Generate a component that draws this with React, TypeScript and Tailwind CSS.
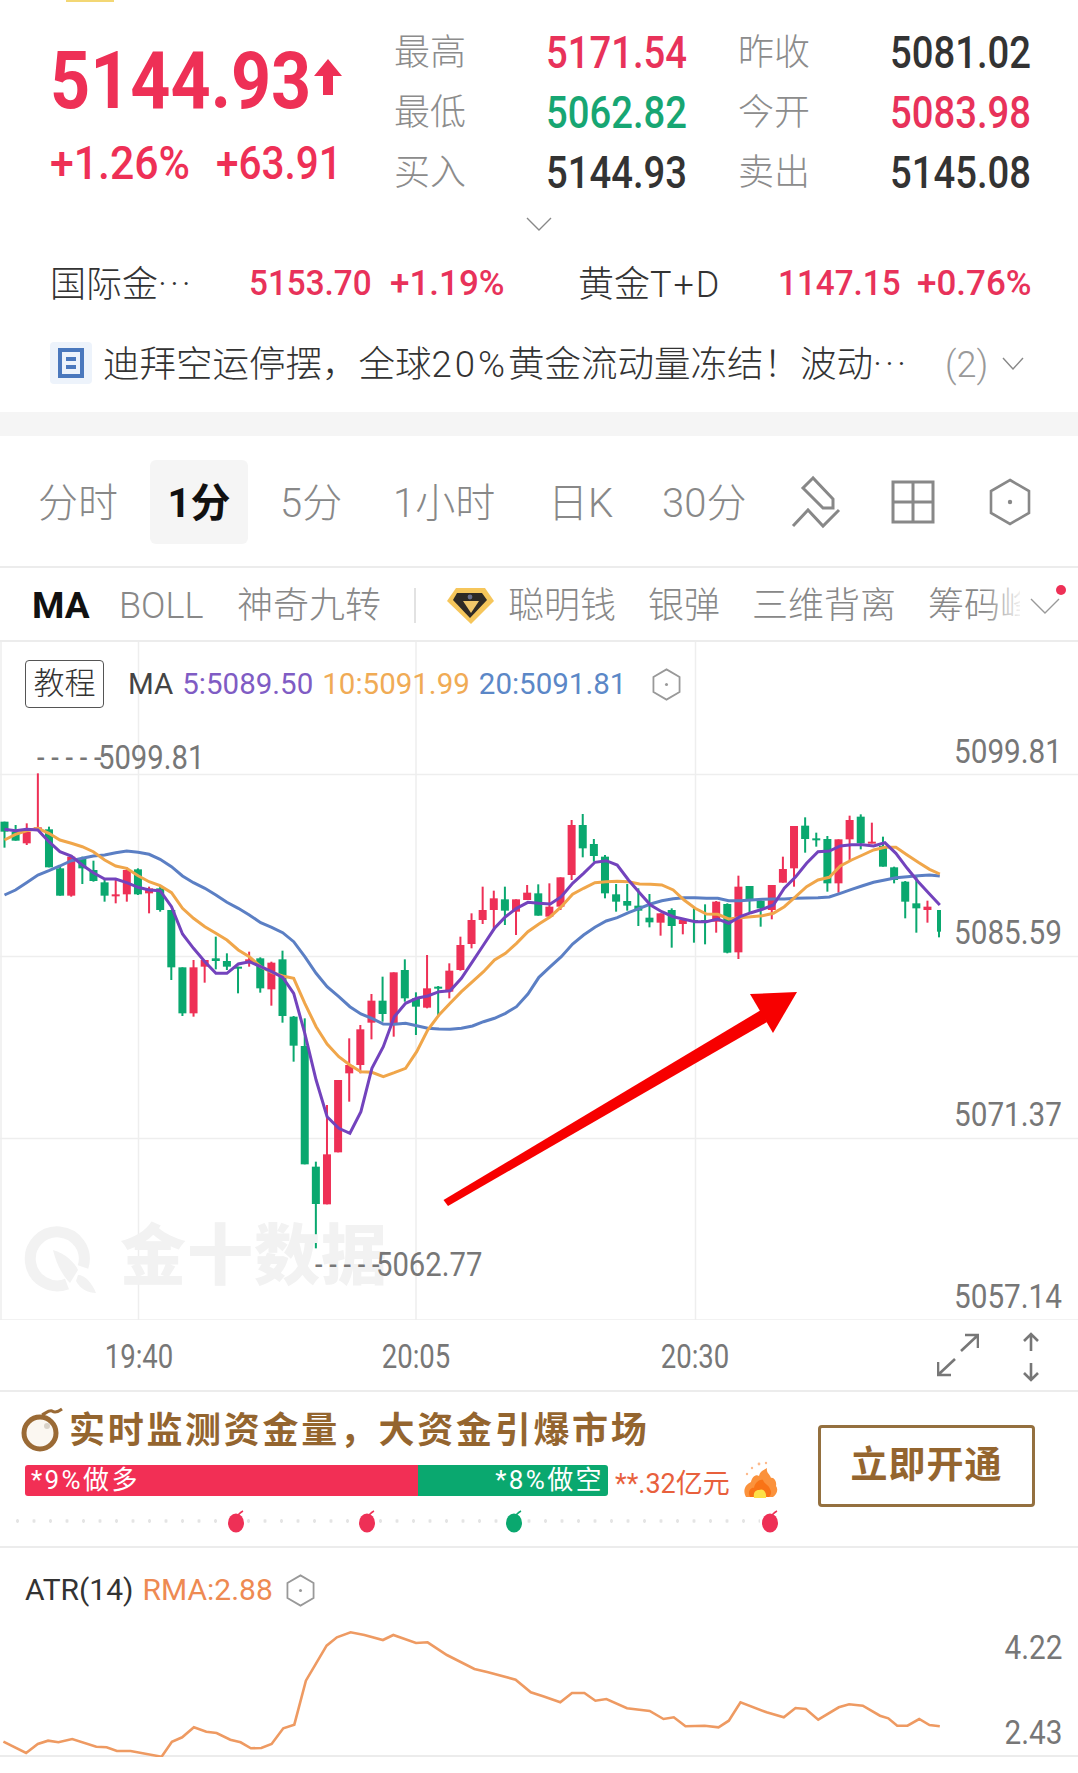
import { ReactNode } from "react";

const DIGIT = "[font-family:Roboto,'Noto_Sans_CJK_SC',sans-serif]";
const RED = "#ee3056";
const GREEN = "#0aa86f";

// candles traced from the screenshot: [color, wickTop, wickBottom, bodyTop, bodyBottom], y is (px - 740) * 3
const CANDLES: [string, number, number, number, number][] = [
  ["g", 245, 323, 245, 275], ["g", 255, 302, 275, 302], ["r", 250, 315, 275, 310], ["r", 100, 270, 262, 270],
  ["g", 260, 382, 268, 382], ["g", 380, 467, 385, 467], ["r", 345, 470, 350, 467], ["g", 350, 432, 355, 385],
  ["g", 362, 425, 390, 423], ["g", 420, 485, 427, 467], ["r", 420, 490, 463, 467], ["r", 382, 485, 390, 463],
  ["g", 385, 465, 388, 463], ["r", 440, 520, 445, 460], ["g", 435, 515, 445, 510], ["g", 510, 720, 510, 682],
  ["g", 682, 828, 682, 820], ["r", 660, 830, 682, 820], ["r", 660, 728, 660, 680], ["g", 590, 688, 655, 663],
  ["g", 640, 690, 663, 680], ["g", 680, 760, 680, 684], ["r", 635, 680, 658, 670], ["g", 652, 758, 655, 745],
  ["r", 665, 797, 668, 748], ["g", 632, 848, 658, 828], ["g", 828, 965, 830, 917], ["g", 835, 1273, 918, 1273],
  ["g", 1265, 1525, 1280, 1392], ["r", 1095, 1393, 1243, 1393], ["r", 1020, 1237, 1020, 1237], ["r", 895, 1085, 975, 1000],
  ["r", 855, 1000, 868, 975], ["r", 762, 898, 782, 848], ["g", 710, 845, 782, 822], ["r", 697, 890, 697, 850],
  ["g", 658, 785, 690, 775], ["g", 757, 885, 775, 800], ["r", 645, 805, 745, 803], ["g", 738, 825, 740, 746],
  ["r", 670, 775, 692, 755], ["r", 590, 692, 615, 690], ["r", 520, 625, 540, 612], ["r", 440, 552, 510, 540],
  ["r", 452, 565, 475, 510], ["g", 440, 555, 478, 512], ["r", 478, 585, 478, 515], ["r", 435, 480, 458, 480],
  ["g", 433, 527, 460, 527], ["r", 430, 530, 500, 530], ["r", 412, 510, 412, 500], ["r", 240, 420, 255, 405],
  ["g", 222, 352, 255, 325], ["g", 297, 365, 312, 348], ["g", 345, 475, 350, 460], ["g", 432, 515, 463, 485],
  ["g", 432, 512, 483, 497], ["g", 445, 558, 497, 512], ["g", 462, 562, 533, 547], ["r", 520, 587, 520, 548],
  ["g", 505, 623, 510, 558], ["r", 535, 583, 540, 552], ["g", 505, 608, 540, 546], ["g", 493, 613, 540, 546],
  ["r", 483, 578, 485, 545], ["g", 490, 640, 492, 638], ["r", 407, 657, 440, 637], ["g", 438, 520, 438, 478],
  ["g", 480, 560, 482, 505], ["r", 435, 538, 435, 510], ["r", 350, 428, 387, 428], ["r", 258, 440, 258, 385],
  ["g", 232, 338, 257, 297], ["g", 278, 320, 295, 299], ["g", 288, 455, 297, 430], ["r", 298, 458, 298, 430],
  ["r", 227, 360, 240, 298], ["g", 223, 328, 230, 310], ["r", 248, 310, 305, 310], ["g", 290, 380, 318, 380],
  ["g", 380, 430, 382, 420], ["g", 423, 535, 425, 485], ["g", 405, 578, 490, 505], ["r", 482, 548, 500, 510],
  ["g", 510, 592, 510, 575],
];

// moving averages: left part in x/2.904, right part in 540 + x/2.914
const MA5L = [13,268,45,272,77,268,110,270,142,305,174,335,207,348,239,375,271,398,304,417,336,417,368,428,401,442,433,450,465,452,498,500,530,582,562,625,595,665,627,700,659,700,692,672,724,665,757,680,789,695,821,712,853,760,885,880,918,1020,950,1130,984,1165,1016,1180,1048,1115,1080,985,1113,920,1145,830,1178,790,1210,775,1242,768,1275,755,1307,752,1340,715,1372,665,1404,615,1436,565,1468,530,1500,505,1533,487,1565,490];
const MA5R = [30,492,62,470,95,430,127,400,160,367,193,362,225,375,258,420,290,458,322,495,355,515,388,530,420,538,452,545,485,545,518,537,550,550,583,530,615,518,648,508,680,495,712,445,745,410,777,370,810,335,843,333,875,318,908,314,940,314,972,318,1005,308,1037,340,1070,385,1102,425,1135,462,1165,495];
const MA10L = [13,300,45,283,77,272,110,265,142,280,174,300,207,310,239,320,271,335,304,360,336,378,368,385,401,407,433,425,465,437,498,458,530,505,562,535,595,560,627,580,659,600,692,630,724,650,757,680,789,697,821,708,853,715,885,790,918,860,950,912,984,950,1016,975,1048,995,1080,997,1113,1010,1145,998,1178,985,1210,935,1242,870,1275,825,1307,790,1340,755,1372,725,1404,695,1436,660,1468,640,1500,610,1533,575,1565,552];
const MA10R = [30,530,62,500,95,463,127,445,160,428,193,425,225,424,258,425,290,432,322,433,355,435,388,450,420,480,452,505,485,522,518,523,550,537,583,533,615,530,648,527,680,520,712,500,745,470,777,440,810,420,843,412,875,378,908,360,940,345,972,330,1005,322,1037,322,1070,345,1102,367,1135,388,1165,402];
const MA20L = [13,465,45,450,77,428,110,405,142,392,174,378,207,362,239,355,271,348,304,345,336,338,368,333,401,337,433,343,465,358,498,380,530,408,562,428,595,445,627,465,659,487,692,505,724,525,757,548,789,562,821,578,853,605,885,650,918,700,950,740,984,770,1016,800,1048,822,1080,835,1113,852,1145,853,1178,850,1210,857,1242,865,1275,867,1307,868,1340,865,1372,858,1404,845,1436,835,1468,820,1500,800,1533,762,1565,712];
const MA20R = [30,680,62,650,95,612,127,585,160,562,193,543,225,533,258,518,290,505,322,492,355,482,388,476,420,473,452,473,485,475,518,475,550,482,583,482,615,480,648,478,680,477,712,477,745,475,777,474,810,473,843,471,875,460,908,448,940,437,972,427,1005,420,1037,413,1070,410,1102,407,1135,405,1165,408];
const ATR = [5,1088,38,1122,55,1095,70,1085,85,1090,105,1080,140,1103,155,1105,170,1116,190,1116,235,1133,250,1088,265,1075,282,1045,300,1058,315,1062,335,1082,350,1090,365,1108,380,1107,395,1095,412,1048,428,1037,445,905,475,800,490,775,510,760,530,768,557,783,572,768,605,792,622,790,650,828,690,870,710,880,750,902,772,940,790,952,815,970,832,942,850,942,866,965,882,960,912,988,945,996,965,1020,980,1015,997,1042,1025,1040,1045,1045,1060,1025,1077,970,1115,1000,1140,1015,1157,987,1172,990,1190,1022,1220,985,1235,976,1255,980,1280,1010,1292,1018,1305,1040,1320,1040,1337,1020,1352,1038,1367,1042];

function maPoints(left: number[], right: number[]) {
  const out: string[] = [];
  for (let i = 0; i < left.length; i += 2) out.push(`${(left[i] / 2.904).toFixed(1)},${(740 + left[i + 1] / 3).toFixed(1)}`);
  for (let i = 0; i < right.length; i += 2) out.push(`${(540 + right[i] / 2.914).toFixed(1)},${(740 + right[i + 1] / 3).toFixed(1)}`);
  return out.join(" ");
}

function atrPoints() {
  const out: string[] = [];
  for (let i = 0; i < ATR.length; i += 2) out.push(`${(ATR[i] / 1.4545).toFixed(1)},${(ATR[i + 1] / 3).toFixed(1)}`);
  return out.join(" ");
}

function Hexagon({ className }: { className: string }) {
  return (
    <svg viewBox="0 0 42 48" className={className} fill="none" stroke="currentColor" strokeWidth="2.6">
      <polygon points="21,2 40,13 40,35 21,46 2,35 2,13" />
      <circle cx="21" cy="24" r="2.2" fill="currentColor" stroke="none" />
    </svg>
  );
}

function Stat({ label, value, color }: { label: string; value: string; color: string }) {
  return (
    <>
      <div className="flex h-[60px] items-center text-[36px] font-light text-[#8c8c8c]">
        <span className="mt-[2px]">{label}</span>
      </div>
      <div className={`${DIGIT} ${color} flex h-[60px] items-center pt-[1px] text-[45px] font-medium`}>
        <span className="inline-block origin-left scale-x-[0.85]">{value}</span>
      </div>
    </>
  );
}

function Tab({ children, className }: { children: ReactNode; className: string }) {
  return <div className={`shrink-0 pt-[4px] ${className}`}>{children}</div>;
}

function Bomb({ color, className }: { color: string; className: string }) {
  return (
    <svg viewBox="0 0 20 24" className={className}>
      <path d="M12 6 C14 4 15 3 17 2" stroke={color} strokeWidth="1.6" fill="none" />
      <ellipse cx="10" cy="14" rx="8" ry="9.5" fill={color} />
    </svg>
  );
}

function Candles() {
  return (
    <>
      {CANDLES.map(([c, wt, wb, bt, bb], i) => {
        const x = 4.5 + 11.12 * i;
        const fill = c === "r" ? RED : GREEN;
        // the last candle is cut off by the edge of the plot
        const last = i === CANDLES.length - 1;
        return (
          <g key={i} fill={fill}>
            <rect x={last ? 938 : x - 1} y={740 + wt / 3} width={2} height={(wb - wt) / 3} />
            <rect x={last ? 937 : x - 4} y={740 + bt / 3} width={last ? 4 : 8} height={Math.max(2, (bb - bt) / 3)} />
          </g>
        );
      })}
    </>
  );
}

function AxisLabel({ value, className }: { value: string; className: string }) {
  return (
    <div className={`${DIGIT} absolute right-[16px] origin-right scale-x-[0.9] text-[33px] leading-[42px] text-[#777] ${className}`}>{value}</div>
  );
}

function TimeLabel({ value, className }: { value: string; className: string }) {
  return (
    <div className={`${DIGIT} absolute top-[15px] w-[100px] scale-x-[0.81] text-center text-[34px] leading-[42px] text-[#777] ${className}`}>{value}</div>
  );
}

function ExtremeLabel({ value, dashClass, numClass }: { value: string; dashClass: string; numClass: string }) {
  return (
    <>
      <div className={`${DIGIT} absolute origin-left scale-x-[0.8] text-[34px] leading-[42px] text-[#777] whitespace-nowrap ${dashClass}`}>- - - - -</div>
      <div className={`${DIGIT} absolute origin-left scale-x-[0.86] text-[34px] leading-[42px] text-[#777] whitespace-nowrap ${numClass}`}>{value}</div>
    </>
  );
}

export default function App() {
  return (
    <div className="relative h-[1773px] w-[1078px] overflow-hidden bg-white [font-family:Roboto,'Noto_Sans_CJK_SC',sans-serif] text-[#333]">
      <div className="ml-[66px] h-[2px] w-[48px] bg-[#f3d774]" />

      {/* quote header */}
      <div className="flex h-[205px] pl-[50px] pt-[20px]">
        <div className="w-[344px]">
          <div className="flex h-[114px] items-center pt-[4px]">
            <span className={`${DIGIT} inline-block w-[264px] shrink-0 origin-left scale-x-[0.875] text-[80px] font-bold text-[#ee3056]`}>5144.93</span>
            <svg viewBox="0 0 28 36" className="mt-[-8px] h-[36px] w-[28px] shrink-0" fill="#ee3056">
              <path d="M14 0 L28 17 L19 17 L19 36 L9 36 L9 17 L0 17 Z" />
            </svg>
          </div>
          <div className={`${DIGIT} flex h-[50px] items-center pt-[4px] text-[46px] font-medium text-[#ee3056]`}>
            <span className="inline-block w-[166px] shrink-0 origin-left scale-x-[0.93]">+1.26%</span>
            <span className="inline-block origin-left scale-x-[0.88]">+63.91</span>
          </div>
        </div>
        <div className="grid grid-cols-[152px_192px_152px_140px] content-start">
          <Stat label="最高" value="5171.54" color="text-[#e8325a]" />
          <Stat label="昨收" value="5081.02" color="text-[#333]" />
          <Stat label="最低" value="5062.82" color="text-[#17a673]" />
          <Stat label="今开" value="5083.98" color="text-[#e8325a]" />
          <Stat label="买入" value="5144.93" color="text-[#333]" />
          <Stat label="卖出" value="5145.08" color="text-[#333]" />
        </div>
      </div>

      <div className="flex h-[45px] justify-center pt-[10px]">
        <svg viewBox="0 0 26 14" className="h-[14px] w-[26px]" fill="none" stroke="#888" strokeWidth="1.4">
          <path d="M1 1 L13 13 L25 1" />
        </svg>
      </div>

      <div className="flex h-[62px] items-center pl-[50px] pt-[3px] text-[36px] font-light whitespace-nowrap">
        <span className="w-[199px]">国际金<span className="tracking-[3px]">···</span></span>
        <span className={`${DIGIT} inline-block w-[141px] origin-left scale-x-[0.95] text-[35px] font-medium text-[#e8325a]`}>5153.70</span>
        <span className={`${DIGIT} w-[188px] text-[35px] font-medium text-[#e8325a]`}>+1.19%</span>
        <span className="w-[200px]">黄金<span className="tracking-[2px]">T+D</span></span>
        <span className={`${DIGIT} inline-block w-[139px] origin-left scale-x-[0.95] text-[35px] font-medium text-[#e8325a]`}>1147.15</span>
        <span className={`${DIGIT} text-[35px] font-medium text-[#e8325a]`}>+0.76%</span>
      </div>

      <div className="flex h-[98px] items-center pl-[50px]">
        <div className="flex h-[42px] w-[42px] items-center justify-center rounded-[4px] bg-[#edf3fb]">
          <div className="flex h-[30px] w-[26px] flex-col items-center justify-center gap-[4px] border-[4px] border-[#4a78bd]">
            <div className="h-[4px] w-[10px] bg-[#4a78bd]" />
            <div className="h-[4px] w-[10px] bg-[#4a78bd]" />
          </div>
        </div>
        <span className="ml-[11px] mt-[4px] w-[842px] text-[36.5px] font-light whitespace-nowrap">
          迪拜空运停摆，全球<span className="tracking-[3px]">20%</span>黄金流动量冻结！波动<span className="tracking-[3px]">···</span>
        </span>
        <span className="mt-[4px] text-[36px] font-light text-[#999]">(2)</span>
        <svg viewBox="0 0 22 13" className="ml-[14px] h-[13px] w-[22px]" fill="none" stroke="#888" strokeWidth="1.4">
          <path d="M1 1 L11 12 L21 1" />
        </svg>
      </div>

      <div className="h-[24px] bg-[#f5f5f5]" />

      {/* period tabs */}
      <div className="flex h-[132px] items-center border-b-[2px] border-[#ececec] pl-[38px] pt-[2px] text-[40px] font-light text-[#888]">
        <Tab className="w-[112px]">分时</Tab>
        <Tab className="flex h-[84px] w-[98px] items-center justify-center rounded-[6px] bg-[#f5f5f5] font-bold text-[#111]">1分</Tab>
        <Tab className="ml-[32px] w-[113px]">5分</Tab>
        <Tab className="w-[155px]">1小时</Tab>
        <Tab className="w-[114px]">日K</Tab>
        <Tab className="w-[118px]">30分</Tab>
        <svg viewBox="0 0 70 70" className="h-[70px] w-[70px] shrink-0" fill="none" stroke="#888" strokeWidth="3">
          <path d="M33 11 L23 21 L43 41 L53 41 L53 32 Z" />
          <path d="M13 59 L28 43 L43 59 L59 43" />
        </svg>
        <svg viewBox="0 0 44 44" className="ml-[41px] h-[44px] w-[44px] shrink-0" fill="none" stroke="#888" strokeWidth="3">
          <path d="M2 2 H42 V42 H2 Z M22 2 V42 M2 22 H42" />
        </svg>
        <Hexagon className="ml-[54px] h-[48px] w-[42px] shrink-0 text-[#888]" />
      </div>

      {/* indicators */}
      <div className="relative flex h-[74px] items-center border-b-[2px] border-[#ececec] pl-[32px] pt-[3px] text-[36px] font-light text-[#888] whitespace-nowrap">
        <span className="w-[87px] text-[37px] font-bold text-[#111]">MA</span>
        <span className="w-[118px] text-[36px]">BOLL</span>
        <span className="w-[177px]">神奇九转</span>
        <div className="h-[35px] w-[2px] bg-[#e2e2e2]" />
        <svg viewBox="0 0 70 60" className="ml-[19px] h-[60px] w-[70px] shrink-0">
          <path d="M21 12 H50 L59 25 L36 48 L12 25 Z" fill="#f6c65b" />
          <path d="M22 17 H47 L52 24 L35 42 L18 24 Z" fill="#2f2a25" />
          <path d="M28 25 H44 L36 37 Z" fill="#f0c66a" />
          <circle cx="35" cy="21" r="2.4" fill="#6a6f8c" />
        </svg>
        <span className="ml-[3px] w-[140px]">聪明钱</span>
        <span className="w-[104px]">银弹</span>
        <span className="w-[176px]">三维背离</span>
        <span className="w-[92px] overflow-hidden">筹码峰</span>
        <div className="absolute left-[985px] top-0 h-full w-[40px] bg-gradient-to-r from-transparent to-white" />
        <svg viewBox="0 0 30 16" className="absolute left-[1030px] top-[30px] h-[16px] w-[30px]" fill="none" stroke="#999" strokeWidth="1.4">
          <path d="M1 1 L15 15 L29 1" />
        </svg>
        <div className="absolute left-[1056px] top-[17px] h-[10px] w-[10px] rounded-full bg-[#ee3056]" />
      </div>

      {/* candle chart */}
      <div className="relative h-[678px]">
        <svg viewBox="0 642 1078 678" className="absolute inset-0 h-[678px] w-[1078px]">
          <g stroke="#eeeeee" strokeWidth="1.5">
            <path d="M1 642 V1320 M138.5 642 V1320 M416 642 V1320 M695.5 642 V1320" />
            <path d="M0 774.5 H1078 M0 956.5 H1078 M0 1138.5 H1078 M0 1320 H1078" />
          </g>
          <g transform="translate(20,1215)">
            <path d="M63 52 A 27 27 0 1 0 47 69" fill="none" stroke="#f2f2f2" strokeWidth="11" />
            <path d="M33 35 C45 38 55 48 58 55 L50 68 C42 60 36 48 33 35 Z" fill="#f2f2f2" />
            <path d="M58 60 C65 60 72 68 76 78 C68 78 60 74 56 66 Z" fill="#f2f2f2" />
          </g>
          <Candles />
          <polyline points={maPoints(MA20L, MA20R)} fill="none" stroke="#5b7fc4" strokeWidth="3" />
          <polyline points={maPoints(MA10L, MA10R)} fill="none" stroke="#f0a64a" strokeWidth="3" />
          <polyline points={maPoints(MA5L, MA5R)} fill="none" stroke="#7343bd" strokeWidth="3" />
          <polygon points="443.5,1200 448,1206 767,1022 761,1010" fill="#f70000" />
          <polygon points="750,994 797,992 773,1033" fill="#f70000" />
        </svg>

        <div className="absolute left-[120px] top-[582px] text-[66px] leading-none font-black tracking-[1px] text-[#f2f2f2]">金十数据</div>

        <div className="absolute left-[25px] top-[18px] flex h-[48px] w-[79px] items-center justify-center rounded-[4px] border border-[#555] text-[31px] font-light">教程</div>
        <div className="absolute left-[128px] top-[18px] flex h-[48px] items-center text-[29.5px] whitespace-nowrap">
          <span className="text-[#444]">MA</span>
          <span className="ml-[9px] text-[#7f5cc4]">5:5089.50</span>
          <span className="ml-[9px] text-[#f0ab55]">10:5091.99</span>
          <span className="ml-[9px] text-[#5b87c7]">20:5091.81</span>
        </div>
        <Hexagon className="absolute left-[652px] top-[26px] h-[33px] w-[29px] text-[#999]" />

        <ExtremeLabel value="5099.81" dashClass="left-[37px] top-[94px]" numClass="left-[98px] top-[94px]" />
        <ExtremeLabel value="5062.77" dashClass="left-[315px] top-[601px]" numClass="left-[376px] top-[601px]" />

        <AxisLabel value="5099.81" className="top-[89px]" />
        <AxisLabel value="5085.59" className="top-[270px]" />
        <AxisLabel value="5071.37" className="top-[452px]" />
        <AxisLabel value="5057.14" className="top-[634px]" />
      </div>

      {/* time axis */}
      <div className="relative h-[72px] border-b-[2px] border-[#ececec]">
        <TimeLabel value="19:40" className="left-[89px]" />
        <TimeLabel value="20:05" className="left-[366px]" />
        <TimeLabel value="20:30" className="left-[645px]" />
        <svg viewBox="0 0 42 44" className="absolute left-[937px] top-[13px] h-[44px] w-[42px]" fill="none" stroke="#777" strokeWidth="2.6">
          <path d="M24 18 L40 3 M28 2 H41 V15 M18 26 L2 41 M14 42 H1 V29" />
        </svg>
        <svg viewBox="0 0 18 50" className="absolute left-[1022px] top-[12px] h-[50px] w-[18px]" fill="none" stroke="#777" strokeWidth="2.6">
          <path d="M9 2 V19 M2 9 L9 2 L16 9 M9 31 V48 M2 41 L9 48 L16 41" />
        </svg>
      </div>

      {/* capital banner */}
      <div className="relative flex h-[156px] border-b-[2px] border-[#ececec]">
        <div className="w-[818px] pl-[15px]">
          <div className="flex h-[69px] items-center pt-[8px]">
            <svg viewBox="0 0 60 60" className="h-[60px] w-[60px] shrink-0" fill="none">
              <circle cx="25" cy="32" r="16" fill="#fbf7f1" stroke="#9a6a35" strokeWidth="5" />
              <path d="M27 14 C31 12 34 9 37 10 C40 12 43 11 47 8" stroke="#9a6a35" strokeWidth="3" />
              <circle cx="32" cy="25" r="3" fill="#d9d2c8" />
            </svg>
            <span className="ml-[-6px] text-[36px] font-bold tracking-[2.7px] whitespace-nowrap text-[#94652f]">实时监测资金量，大资金引爆市场</span>
          </div>
          <div className="flex items-center">
            <div className="ml-[10px] flex h-[31px] w-[583px] overflow-hidden rounded-[3px] text-[26px] leading-[31px] tracking-[2.4px] text-white">
              <div className="w-[393px] bg-[#f22f55] pl-[6px]">*9%做多</div>
              <div className="flex-1 bg-[#0aa86f] pr-[4px] text-right">*8%做空</div>
            </div>
            <span className="ml-[7px] mt-[8px] text-[27px] leading-[31px] whitespace-nowrap text-[#e8603c]">**.32亿元</span>
            <svg viewBox="0 0 37 44" className="ml-[12px] mt-[-10px] h-[44px] w-[37px] shrink-0">
              <path d="M4 43 C0 36 4 30 9 28 C10 23 14 20 17 22 C18 17 22 16 25 14 C24 19 28 20 29 24 C32 23 35 28 34 32 C37 36 34 41 31 43 Z" fill="#fb923c" />
              <path d="M8 43 C5 38 9 33 12 34 C13 28 18 25 21 26 C22 30 27 31 28 35 C30 38 29 41 27 43 Z" fill="#f97316" />
              <path d="M12 44 C11 38 14 36 17 36 C21 34 25 38 24 44 Z" fill="#fde047" />
              <g fill="#fdba8c">
                <circle cx="10" cy="14" r="1.2" />
                <circle cx="17" cy="10" r="1.4" />
                <circle cx="5" cy="20" r="1.2" />
                <circle cx="24" cy="9" r="1.2" />
              </g>
            </svg>
          </div>
          <div className="relative ml-[-3px] mt-[9px] h-[24px] w-[770px] bg-[radial-gradient(circle,#e4e4e4_1.5px,transparent_2px)] bg-[length:16.5px_6px] bg-center bg-repeat-x">
            <Bomb color="#ee3056" className="absolute left-[214px] top-0 h-[24px] w-[20px] bg-white" />
            <Bomb color="#ee3056" className="absolute left-[345px] top-0 h-[24px] w-[20px] bg-white" />
            <Bomb color="#0aa86f" className="absolute left-[492px] top-0 h-[24px] w-[20px] bg-white" />
            <Bomb color="#ee3056" className="absolute left-[748px] top-0 h-[24px] w-[20px] bg-white" />
          </div>
        </div>
        <div className="mt-[33px] flex h-[82px] w-[217px] items-center justify-center rounded-[4px] border-[3px] border-[#94703f] text-[37px] font-bold tracking-[1px] text-[#94652f]">立即开通</div>
      </div>

      {/* ATR pane */}
      <div className="relative h-[209px] border-b-[2px] border-[#ececec]">
        <div className="absolute left-[25px] top-[17px] flex h-[48px] items-center text-[30px] whitespace-nowrap">
          <span className="text-[#333]">ATR(14)</span>
          <span className="ml-[9px] text-[#ee8a52]">RMA:2.88</span>
        </div>
        <Hexagon className="absolute left-[286px] top-[26px] h-[33px] w-[29px] text-[#999]" />
        <svg viewBox="0 0 1078 209" className="absolute inset-0 h-[209px] w-[1078px]">
          <g transform="translate(0,-169)">
            <polyline points={atrPoints()} fill="none" stroke="#ee9a62" strokeWidth="2.6" />
          </g>
        </svg>
        <AxisLabel value="4.22" className="top-[79px]" />
        <AxisLabel value="2.43" className="top-[164px]" />
      </div>
    </div>
  );
}
